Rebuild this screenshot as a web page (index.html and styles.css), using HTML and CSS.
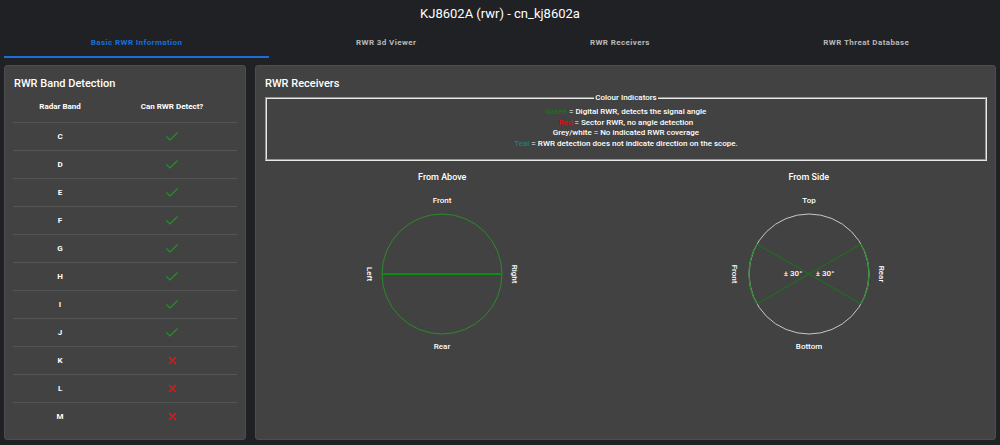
FILE: index.html
```html
<!DOCTYPE html>
<html lang="en">
<head>
    <meta charset="UTF-8">
    <meta name="viewport" content="width=device-width, initial-scale=1.0">
    <link rel="stylesheet" href="styles.css">
    <title>KJ8602A (rwr) - cn_kj8602a</title>
</head>
<body>

    <h1 class="page-title">KJ8602A (rwr) - cn_kj8602a</h1>

    <nav class="tabs">
        <div class="tab active">Basic RWR Information</div>
        <div class="tab">RWR 3d Viewer</div>
        <div class="tab">RWR Receivers</div>
        <div class="tab">RWR Threat Database</div>
    </nav>

    <main class="content">
        <section class="panel bands">
            <h2 class="panel-title">RWR Band Detection</h2>
            <table class="band-table">
                <thead>
                    <tr><th>Radar Band</th><th>Can RWR Detect?</th></tr>
                </thead>
                <tbody id="band-rows"></tbody>
            </table>
        </section>

        <section class="panel receivers">
            <h2 class="panel-title">RWR Receivers</h2>
            <fieldset class="legend-box">
                <legend>Colour Indicators</legend>
                <p><span class="c-green">Green</span> = Digital RWR, detects the signal angle</p>
                <p><span class="c-red">Red</span> = Sector RWR, no angle detection</p>
                <p>Grey/white = No indicated RWR coverage</p>
                <p><span class="c-teal">Teal</span> = RWR detection does not indicate direction on the scope.</p>
            </fieldset>

            <div class="diagrams">
                <div class="diagram">
                    <h3>From Above</h3>
                    <svg width="170" height="168" viewBox="0 0 170 168">
                        <circle cx="85" cy="84" r="60" fill="none" stroke="#2b8a2b" stroke-width="1"/>
                        <line x1="25" y1="84" x2="145" y2="84" stroke="#0f8c0f" stroke-width="2"/>
                        <text x="85" y="11" class="lbl">Front</text>
                        <text x="85" y="157" class="lbl">Rear</text>
                        <text x="12" y="84" class="lbl" transform="rotate(90 12 84)">Left</text>
                        <text x="157" y="84" class="lbl" transform="rotate(90 157 84)">Right</text>
                    </svg>
                </div>
                <div class="diagram">
                    <h3>From Side</h3>
                    <svg width="170" height="168" viewBox="0 0 170 168">
                        <circle cx="85" cy="84" r="60" fill="none" stroke="#c8c8c8" stroke-width="1"/>
                        <!-- sectors at +/- 30 deg, front and rear -->
                        <path d="M33.04 54 A60 60 0 0 0 33.04 114" fill="none" stroke="#2b8a2b" stroke-width="1.2"/>
                        <path d="M136.96 54 A60 60 0 0 1 136.96 114" fill="none" stroke="#2b8a2b" stroke-width="1.2"/>
                        <line x1="33.04" y1="54" x2="136.96" y2="114" stroke="#137a13" stroke-width="1"/>
                        <line x1="33.04" y1="114" x2="136.96" y2="54" stroke="#137a13" stroke-width="1"/>
                        <text x="69" y="84" class="lbl">± 30°</text>
                        <text x="101" y="84" class="lbl">± 30°</text>
                        <text x="85" y="11" class="lbl">Top</text>
                        <text x="85" y="157" class="lbl">Bottom</text>
                        <text x="10" y="84" class="lbl" transform="rotate(90 10 84)">Front</text>
                        <text x="157" y="84" class="lbl" transform="rotate(90 157 84)">Rear</text>
                    </svg>
                </div>
            </div>
        </section>
    </main>

    <script>
        // bandes radar et détection
        const bands = [
            ['C', true], ['D', true], ['E', true], ['F', true], ['G', true],
            ['H', true], ['I', true], ['J', true], ['K', false], ['L', false], ['M', false]
        ];

        const tick = '<svg width="12" height="9" viewBox="0 0 12 9"><polyline points="0.5,4.5 4,8 11.5,0.5" fill="none" stroke="#1c9a1c" stroke-width="1.2"/></svg>';
        const cross = '<svg width="9" height="9" viewBox="0 0 9 9"><path d="M1 1 L8 8 M8 1 L1 8" stroke="#e8141a" stroke-width="1.4"/></svg>';

        const body = document.getElementById('band-rows');
        bands.forEach(b => {
            const row = document.createElement('tr');
            row.innerHTML = `<td>${b[0]}</td><td>${b[1] ? tick : cross}</td>`;
            body.appendChild(row);
        });
    </script>
</body>
</html>
```

FILE: styles.css
```css
body {
    margin: 0;
    background-color: #1f2124;
    color: #fff;
    font-family: Roboto, 'Liberation Sans', sans-serif;
    height: 445px;
    overflow: hidden;
}
.page-title {
    margin: 0;
    height: 28px;
    line-height: 27px;
    text-align: center;
    font-size: 13px;
    font-weight: 400;
}
.tabs {
    display: flex;
    margin: 0 4px;
    height: 30px;
}
.tab {
    flex: 1 1 auto;
    text-align: center;
    font-size: 8px;
    font-weight: 700;
    letter-spacing: 0.4px;
    color: #b9b9b9;
    line-height: 30px;
    border-bottom: 2px solid transparent;
}
.tab.active {
    color: #1a6fd6;
    border-bottom-color: #1a6fd6;
}
.content {
    display: flex;
    gap: 9px;
    padding: 7px 4px 0 4px;
}
.panel {
    background-color: #424242;
    border: 1px solid #4d4d4d;
    border-radius: 3px;
    height: 375px;
    box-sizing: border-box;
    padding: 10px 8px;
}
.bands {
    width: 242px;
    flex: none;
}
.receivers {
    flex: 1;
}
.panel-title {
    margin: 0 0 0 1px;
    font-size: 11px;
    font-weight: 500;
    line-height: 15px;
}
.band-table {
    width: 100%;
    border-collapse: collapse;
    font-size: 8px;
    font-weight: 700;
    text-align: center;
}
.band-table th {
    height: 29px;
    border-bottom: 1px solid #555;
    font-weight: 700;
}
.band-table th:first-child,
.band-table td:first-child {
    width: 42%;
}
.band-table td {
    height: 27px;
    padding: 0;
    border-bottom: 1px solid #555;
}
.band-table tr:last-child td {
    border-bottom: none;
}
.band-table svg {
    display: block;
    margin: 0 auto;
}
.legend-box {
    margin: 2px 0 0 1px;
    padding: 5px 0 10px 0;
    border: 2px groove #e8e8e8;
    text-align: center;
    font-size: 8px;
    font-weight: 500;
}
.legend-box legend {
    padding: 0 1px;
}
.legend-box p {
    margin: 0;
    line-height: 10.6px;
}
.c-green { color: #137a13; }
.c-red { color: #d81010; }
.c-teal { color: #1f7f80; }
.diagrams {
    display: flex;
    gap: 10px;
}
.diagram {
    flex: 1;
    display: flex;
    flex-direction: column;
    align-items: center;
}
.diagram h3 {
    margin: 10px 0 7px 0;
    font-size: 9px;
    font-weight: 500;
    line-height: 12px;
}
.lbl {
    fill: #fff;
    font-size: 8px;
    font-weight: 500;
    text-anchor: middle;
    dominant-baseline: middle;
}
```
